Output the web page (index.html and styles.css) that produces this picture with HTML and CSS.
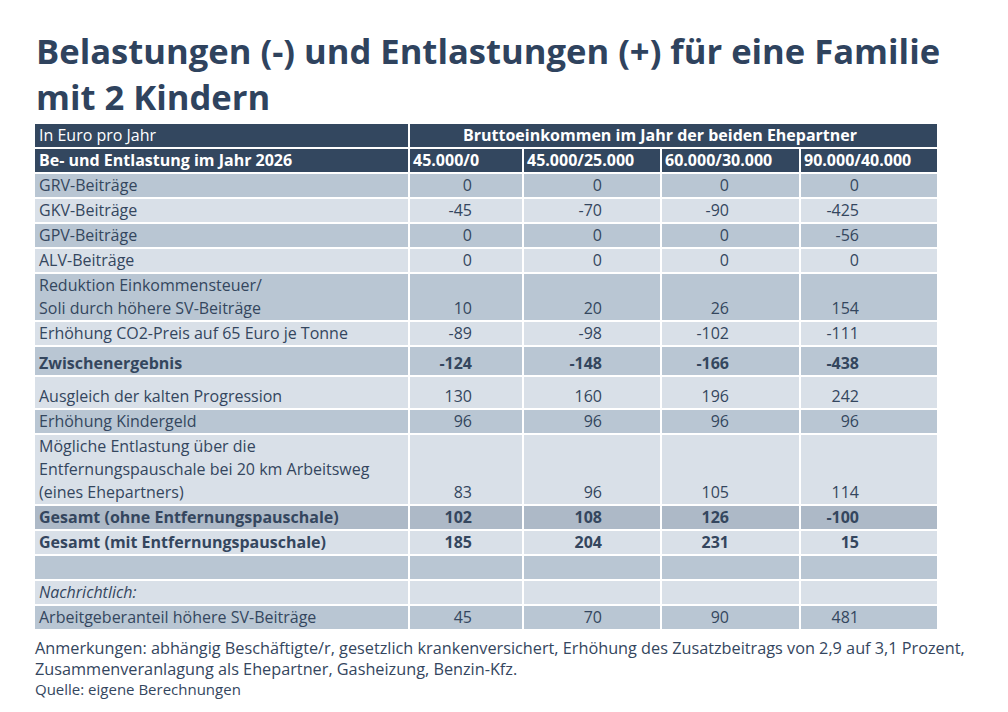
FILE: index.html
```html
<!DOCTYPE html>
<html lang="de">
<head>
<meta charset="utf-8">
<title>Belastungen und Entlastungen</title>
<link rel="stylesheet" href="styles.css">
</head>
<body>
<div class="page">
  <h1 class="title">Belastungen (-) und Entlastungen (+) für eine Familie<br>mit 2 Kindern</h1>
  <table class="data">
    <colgroup>
      <col class="c1"><col class="c2"><col class="c3"><col class="c4"><col class="c5">
    </colgroup>
    <thead>
      <tr class="h1">
        <th class="lab">In Euro pro Jahr</th>
        <th colspan="4" class="span">Bruttoeinkommen im Jahr der beiden Ehepartner</th>
      </tr>
      <tr class="h2">
        <th class="lab">Be- und Entlastung im Jahr 2026</th>
        <th>45.000/0</th><th>45.000/25.000</th><th>60.000/30.000</th><th>90.000/40.000</th>
      </tr>
    </thead>
    <tbody>
      <tr class="dk"><td>GRV-Beiträge</td><td>0</td><td>0</td><td>0</td><td>0</td></tr>
      <tr class="lt"><td>GKV-Beiträge</td><td>-45</td><td>-70</td><td>-90</td><td>-425</td></tr>
      <tr class="dk"><td>GPV-Beiträge</td><td>0</td><td>0</td><td>0</td><td>-56</td></tr>
      <tr class="lt"><td>ALV-Beiträge</td><td>0</td><td>0</td><td>0</td><td>0</td></tr>
      <tr class="dk"><td>Reduktion Einkommensteuer/<br>Soli durch höhere SV-Beiträge</td><td>10</td><td>20</td><td>26</td><td>154</td></tr>
      <tr class="lt"><td>Erhöhung CO2-Preis auf 65 Euro je Tonne</td><td>-89</td><td>-98</td><td>-102</td><td>-111</td></tr>
      <tr class="dk bold tall28"><td>Zwischenergebnis</td><td>-124</td><td>-148</td><td>-166</td><td>-438</td></tr>
      <tr class="lt tall31"><td>Ausgleich der kalten Progression</td><td>130</td><td>160</td><td>196</td><td>242</td></tr>
      <tr class="dk"><td>Erhöhung Kindergeld</td><td>96</td><td>96</td><td>96</td><td>96</td></tr>
      <tr class="lt"><td>Mögliche Entlastung über die<br>Entfernungspauschale bei 20 km Arbeitsweg<br>(eines Ehepartners)</td><td>83</td><td>96</td><td>105</td><td>114</td></tr>
      <tr class="dx bold"><td>Gesamt (ohne Entfernungspauschale)</td><td>102</td><td>108</td><td>126</td><td>-100</td></tr>
      <tr class="lt bold"><td>Gesamt (mit Entfernungspauschale)</td><td>185</td><td>204</td><td>231</td><td>15</td></tr>
      <tr class="dk"><td></td><td></td><td></td><td></td><td></td></tr>
      <tr class="lt"><td class="it">Nachrichtlich:</td><td></td><td></td><td></td><td></td></tr>
      <tr class="dk"><td>Arbeitgeberanteil höhere SV-Beiträge</td><td>45</td><td>70</td><td>90</td><td>481</td></tr>
    </tbody>
  </table>
  <p class="note">Anmerkungen: abhängig Beschäftigte/r, gesetzlich krankenversichert, Erhöhung des Zusatzbeitrags von 2,9 auf 3,1 Prozent, Zusammenveranlagung als Ehepartner, Gasheizung, Benzin-Kfz.</p>
  <p class="src">Quelle: eigene Berechnungen</p>
</div>
</body>
</html>
```
FILE: styles.css
```css
* { box-sizing: border-box; }
html, body { margin: 0; padding: 0; background: #ffffff; }
body {
  font-family: "Open Sans", "Noto Sans", sans-serif;
  color: #34465e;
}
.page {
  padding: 28px 0 0 35px;
}
.title {
  margin: 0 0 2px 1px;
  font-size: 34.6px;
  line-height: 46px;
  font-weight: 700;
  color: #2f435e;
  white-space: nowrap;
}
.data {
  border-collapse: separate;
  border-spacing: 2px;
  margin: 0 0 0 -2px;
  table-layout: fixed;
  width: 905px;
  font-size: 16px;
  line-height: 23px;
}
.c1 { width: 373px; }
.c2 { width: 112px; }
.c3 { width: 136px; }
.c4 { width: 137px; }
.c5 { width: 136px; }
.data th, .data td {
  padding: 0;
  height: 23px;
  vertical-align: bottom;
  white-space: nowrap;
}
.data thead th {
  background: #33475f;
  color: #ffffff;
  text-align: left;
  padding-left: 3px;
}
.h1 th { font-weight: 400; }
.h1 th.span { font-weight: 700; text-align: center; padding-right: 30px; }
.h2 th { font-weight: 700; }
.data thead th.lab { padding-left: 4px; }
.data tbody td:first-child { text-align: left; padding-left: 4px; }
.data tbody td { text-align: right; }
.data tbody td:nth-child(2) { padding-right: 50px; }
.data tbody td:nth-child(3) { padding-right: 58px; }
.data tbody td:nth-child(4) { padding-right: 70px; }
.data tbody td:nth-child(5) { padding-right: 78px; }
.dk td { background: #b9c6d3; }
.lt td { background: #d9e0e8; }
.dx td { background: #adb9c7; }
.bold td { font-weight: 700; }
.tall28 td { height: 28px; }
.tall31 td { height: 31px; }
.it { font-style: italic; }
.note {
  margin: 7px 0 0 0;
  width: 960px;
  font-size: 16.25px;
  line-height: 21px;
}
.src {
  margin: 0;
  font-size: 15px;
  line-height: 19px;
}
```
